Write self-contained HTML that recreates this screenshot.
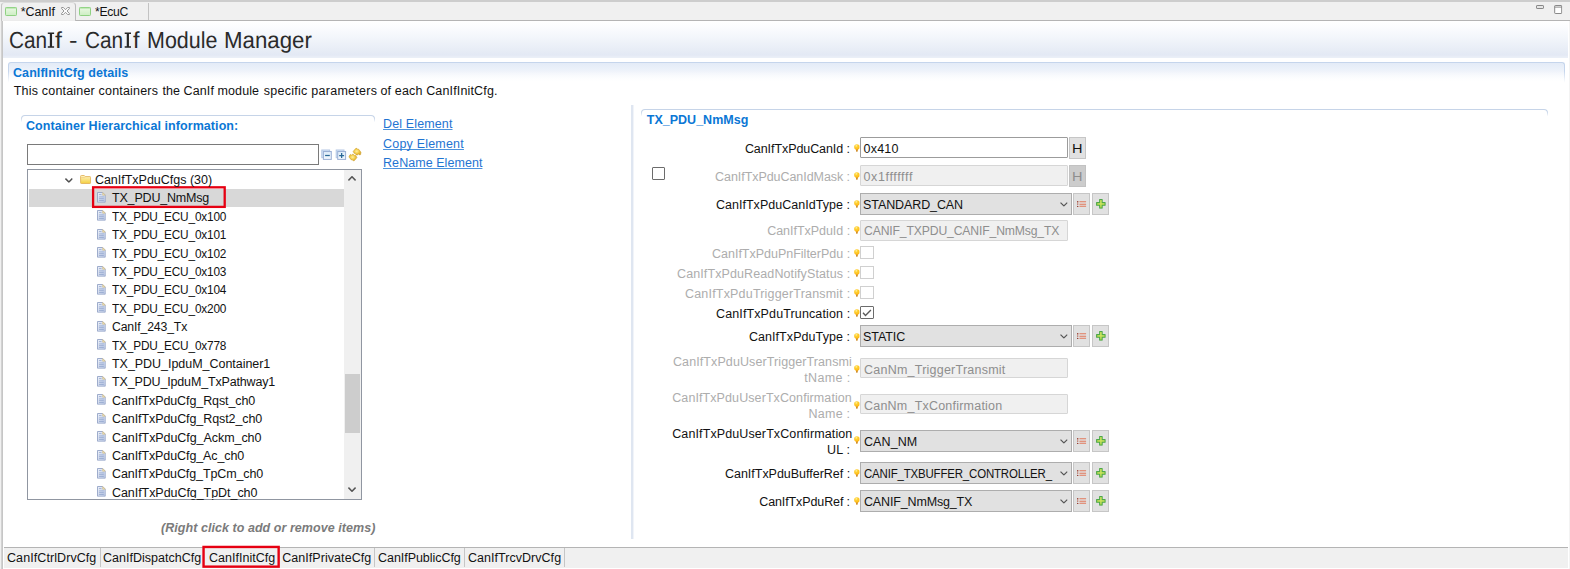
<!DOCTYPE html>
<html lang="en"><head><meta charset="utf-8"><title>CanIf - CanIf Module Manager</title>
<style>
html,body{margin:0;padding:0;font-family:"Liberation Sans",sans-serif;}
body{width:1570px;height:569px;overflow:hidden;position:relative;background:#f0f0f0;
  font-family:"Liberation Sans",sans-serif;color:#1a1a1a;}
.a{position:absolute;box-sizing:border-box;}
.t{position:absolute;white-space:nowrap;line-height:1;color:#121212;transform-origin:0 0;}
.t.title{color:#2b2b2b;}
.t.ghost{color:transparent;}
.t.b{font-weight:bold;}
.t.blue{color:#0b77d5;}
.t.lnk{color:#1f74d2;text-decoration:underline;text-decoration-thickness:1px;text-underline-offset:1px;text-decoration-skip-ink:none;text-decoration-color:#4d93dd;}
.t.bi{font-weight:bold;font-style:italic;}
.t.gray{color:#7b7b7b;}
.t.dis{color:#adadad;}
.t.dis2{color:#8e8e8e;}
svg{position:absolute;overflow:visible;}

/* ---- frame ---- */
#topstrip{left:0;top:0;width:1570px;height:2px;background:#cdcdcd;}
#leftedge{left:1px;top:4px;width:2px;height:565px;background:linear-gradient(to right,#d2d2d2 50%,#c6c6c6 50%);}
#tabline{left:75px;top:20px;width:1495px;height:1px;background:#b4b4b4;}
#editor{left:3px;top:21px;width:1566.4px;height:548px;background:#fff;}
#hdr{left:3px;top:21px;width:1565.4px;height:38px;
  background:linear-gradient(to bottom,#ffffff 0px,#fbfcfe 6px,#f3f6fb 16px,#e3e9f4 34px,#e8edf6 35.5px,#eaeff7 36.6px,#ffffff 37.2px);}
#tab1{left:1px;top:2px;width:75px;height:19px;background:#f0f0f0;border:1px solid #bcbcbc;border-top-color:#dcdcdc;border-left-color:#c4c4c4;border-bottom:none;border-radius:4px 4px 0 0;}
#tab1sh{left:3px;top:20px;width:72px;height:1px;background:#ececec;}
#tab2r{left:148px;top:3px;width:1px;height:17px;background:#c3c3c3;}

/* ---- sections ---- */
#sec1{left:8px;top:62px;width:1557px;height:22px;border:1px solid #c5d5ec;border-bottom:none;border-radius:3px 3px 0 0;
  background:linear-gradient(to bottom,#e3ebf7 0,#f1f5fb 10px,#ffffff 20px);}
#sec1:after{content:"";position:absolute;left:-1px;right:-1px;top:8px;bottom:0;
  background:linear-gradient(to bottom,rgba(255,255,255,0),#fff 90%);}
.sec{border:1px solid #c6d4e8;border-bottom:none;border-radius:4px 4px 0 0;height:8px;}
.sec:after{content:"";position:absolute;left:-1px;right:-1px;top:2px;bottom:0;
  background:linear-gradient(to bottom,rgba(255,255,255,0),#fff 85%);}
#sash{left:631px;top:105px;width:3px;height:434px;background:linear-gradient(to right,#dfe6f1 66.6%,#f1f4f9 66.6%);}

/* ---- left widgets ---- */
#filter{left:27px;top:144px;width:292px;height:21px;border:1px solid #7a7a7a;background:#fff;}
#tree{left:27px;top:169px;width:335px;height:331px;border:1px solid #9096a1;background:#fff;overflow:hidden;}
#sel{left:29px;top:189px;width:314.6px;height:17.6px;background:#d8d8d8;}
#redsel{left:92px;top:186.2px;width:134px;height:21.6px;border:2px solid #e60f1e;}
#sbar{left:344.4px;top:170px;width:16.6px;height:329px;background:#f0f0f0;}
#thumb{left:344.6px;top:373.6px;width:15.4px;height:59.2px;background:#cdcdcd;}

/* ---- form widgets ---- */
.inp{border:1px solid #9c9c9c;background:#fff;border-radius:1px;}
.inp.d{border:1px solid #d6d6d6;background:#f0f0f0;}
.btn{border:1px solid #c6c6c6;background:#e1e1e1;}
.btn.d{background:#cccccc;border-color:#c2c2c2;}
.cmb{border:1px solid #adadad;background:#e1e1e1;}
.cb{border:1px solid #d0d0d0;background:#fff;}
.cb.e{border:1px solid #6c6c6c;border-radius:1px;}

/* ---- bottom tabs ---- */
#bot{left:4px;top:547px;width:1564.4px;height:20.7px;background:#f0f0f0;border-top:1px solid #b4b4b4;}
.bsep{top:548px;width:1px;height:19px;background:#c6c6c6;}
#bred{left:202.4px;top:546px;width:77.4px;height:21.6px;border:2px solid #e60f1e;}
#botline{left:1569.4px;top:21px;width:1px;height:548px;background:#f3f3f3;}

</style></head>
<body>

<svg width="0" height="0" style="position:absolute">
<defs>
<linearGradient id="gGreen" x1="0" y1="0" x2="0" y2="1"><stop offset="0" stop-color="#eaf8e4"/><stop offset="1" stop-color="#cdeec3"/></linearGradient>
<linearGradient id="gFold" x1="0" y1="0" x2="0" y2="1"><stop offset="0" stop-color="#fff6c8"/><stop offset="1" stop-color="#f4cf3e"/></linearGradient>
<linearGradient id="gFile" x1="0" y1="0" x2="1" y2="1"><stop offset="0" stop-color="#eef2fa"/><stop offset="1" stop-color="#b9c7e4"/></linearGradient>
<radialGradient id="gBulb" cx="0.4" cy="0.3" r="0.7"><stop offset="0" stop-color="#fff2a8"/><stop offset="0.35" stop-color="#ffd233"/><stop offset="1" stop-color="#fdb515"/></radialGradient>
<linearGradient id="gPlus" x1="0" y1="0" x2="0" y2="1"><stop offset="0" stop-color="#c9e356"/><stop offset="1" stop-color="#8cc63f"/></linearGradient>
<linearGradient id="gSq" x1="0" y1="0" x2="0" y2="1"><stop offset="0" stop-color="#dbeaf8"/><stop offset="1" stop-color="#f4f9fe"/></linearGradient>
<symbol id="iTab" viewBox="0 0 12 9"><rect x="0.5" y="0.5" width="11" height="8" rx="0.8" fill="url(#gGreen)" stroke="#8fd183"/><rect x="0.5" y="0.5" width="11" height="1.2" fill="#9ddb92" opacity=".7"/></symbol>
<symbol id="iClose" viewBox="0 0 9 8"><path d="M0.6 0.5 L2.4 0.5 L4.5 2.7 L6.6 0.5 L8.4 0.5 L8.4 1.6 L6 4 L8.4 6.4 L8.4 7.5 L6.6 7.5 L4.5 5.3 L2.4 7.5 L0.6 7.5 L0.6 6.4 L3 4 L0.6 1.6 Z" fill="#fdfdfd" stroke="#8c8c8c" stroke-width="0.9" stroke-linejoin="round"/></symbol>
<symbol id="iFolder" viewBox="0 0 11 9"><path d="M0.5 1.3 Q0.5 0.5 1.3 0.5 L4.2 0.5 L5.2 1.6 L9.8 1.6 Q10.5 1.6 10.5 2.3 L10.5 7.8 Q10.5 8.5 9.8 8.5 L1.2 8.5 Q0.5 8.5 0.5 7.8 Z" fill="url(#gFold)" stroke="#e3b45e" stroke-width="0.9"/><path d="M1.2 2.6 L4.6 2.6 L5.4 1.9" fill="none" stroke="#f0c878" stroke-width="0.7"/></symbol>
<symbol id="iFile" viewBox="0 0 9 11"><path d="M0.5 0.5 L5.8 0.5 L8.5 3.2 L8.5 10.5 L0.5 10.5 Z" fill="url(#gFile)" stroke="#96a5c8" stroke-width="0.95"/><path d="M5.8 0.5 L5.8 3.2 L8.5 3.2 Z" fill="#efe2b4" stroke="#cdb988" stroke-width="0.6"/><path d="M2 2.6 H4.6 M2 5 H7 M2 6.8 H7 M2 8.6 H7" stroke="#7f95c4" stroke-width="0.8" fill="none" opacity=".8"/></symbol>
<symbol id="iBulb" viewBox="0 0 6 8.4"><path d="M1.7 4.6 L4.3 4.6 L3.7 7.6 L3 8.2 L2.3 7.6 Z" fill="#cf8a24"/><circle cx="3" cy="3" r="2.85" fill="url(#gBulb)"/></symbol>
<symbol id="iChev" viewBox="0 0 8 5"><path d="M0.4 0.6 L4 4.2 L7.6 0.6" fill="none" stroke="#555" stroke-width="1.25"/></symbol><symbol id="iChevT" viewBox="0 0 8 5"><path d="M0.4 0.6 L4 4.2 L7.6 0.6" fill="none" stroke="#505050" stroke-width="1.55"/></symbol>
<symbol id="iChevUp" viewBox="0 0 8 5"><path d="M0.4 4.4 L4 0.8 L7.6 4.4" fill="none" stroke="#555" stroke-width="1.6"/></symbol><symbol id="iChevDn" viewBox="0 0 8 5"><path d="M0.4 0.6 L4 4.2 L7.6 0.6" fill="none" stroke="#555" stroke-width="1.6"/></symbol>
<symbol id="iList" viewBox="0 0 10 6"><path d="M2.5 0.7 H9.3 M2.5 3.25 H9.3 M2.5 5.4 H9.3" stroke="#e17a5c" stroke-width="1.05" fill="none"/><circle cx="0.75" cy="0.7" r="0.7" fill="#8a2415"/><circle cx="0.75" cy="3.1" r="0.65" fill="#a13a26"/><circle cx="0.75" cy="5.4" r="0.7" fill="#8a2415"/><path d="M0.75 1.4 V2.4" stroke="#c2573c" stroke-width="0.6"/></symbol>
<symbol id="iPlus" viewBox="0 0 10 10"><path d="M3.7 0.6 H6.3 V3.7 H9.4 V6.3 H6.3 V9.4 H3.7 V6.3 H0.6 V3.7 H3.7 Z" fill="url(#gPlus)" stroke="#4ea84c" stroke-width="1.05" stroke-linejoin="round"/><path d="M5 1.6 V8.4 M1.6 5 H8.4" stroke="#dcea6c" stroke-width="0.9" opacity=".8"/></symbol>
<symbol id="iColl" viewBox="0 0 11 11"><rect x="0.5" y="0.5" width="8.6" height="8.4" fill="#d3e4f5" stroke="#b7c7e3" stroke-width="0.9"/><rect x="2.1" y="2" width="8.4" height="8.4" fill="url(#gSq)" stroke="#a3b4d6" stroke-width="0.9"/><path d="M3.7 6.2 H8.9" stroke="#2f6f9f" stroke-width="1.1"/></symbol>
<symbol id="iExp" viewBox="0 0 11 11"><rect x="0.5" y="0.5" width="8.6" height="8.4" fill="#d3e4f5" stroke="#b7c7e3" stroke-width="0.9"/><rect x="2.1" y="2" width="8.4" height="8.4" fill="url(#gSq)" stroke="#a3b4d6" stroke-width="0.9"/><path d="M3.7 6.2 H8.9 M6.3 3.6 V8.8" stroke="#2f6f9f" stroke-width="1.1"/></symbol>
<symbol id="iSync" viewBox="0 0 12 13"><path d="M4.2 2.8 L7 0.4 L9.6 0.9 L11.6 3.6 L10.3 5.6 L9.2 4.4 L7.6 4.2 L6.4 5.3 Z" fill="#f2ce4c" stroke="#cfa02a" stroke-width="0.7" stroke-linejoin="round"/><path d="M7.8 10.2 L5 12.6 L2.4 12.1 L0.4 9.4 L1.7 7.4 L2.8 8.6 L4.4 8.8 L5.6 7.7 Z" fill="#f2ce4c" stroke="#cfa02a" stroke-width="0.7" stroke-linejoin="round"/></symbol>
<symbol id="iMin" viewBox="0 0 8 4"><rect x="0.5" y="0.5" width="7" height="3" rx="0.6" fill="#e6e6e6" stroke="#7c7c7c" stroke-width="0.9"/></symbol>
<symbol id="iMax" viewBox="0 0 8 9"><rect x="0.5" y="0.5" width="7" height="8" rx="0.6" fill="#ffffff" stroke="#7c7c7c" stroke-width="0.9"/><path d="M0.5 2.1 H7.5" stroke="#7c7c7c" stroke-width="0.9"/></symbol>
<symbol id="iCheck" viewBox="0 0 10 8"><path d="M0.8 3.9 L3.6 6.8 L9.3 0.8" fill="none" stroke="#3a3a3a" stroke-width="1.1"/></symbol>
</defs>
</svg>

<div class="a" id="topstrip"></div>
<div class="a" id="editor"></div>
<div class="a" id="hdr"></div>
<div class="a" id="tabline"></div>
<div class="a" id="leftedge"></div>
<div class="a" id="tab1"></div><div class="a" id="tab1sh"></div><div class="a" id="tab2r"></div>
<svg class="ic" style="left:5.00px;top:7.00px" width="12" height="9"><use href="#iTab"/></svg>
<svg class="ic" style="left:61.00px;top:7.00px" width="9" height="8"><use href="#iClose"/></svg>
<svg class="ic" style="left:79.40px;top:7.00px" width="12" height="9"><use href="#iTab"/></svg>
<svg class="ic" style="left:1536.00px;top:5.00px" width="8" height="4"><use href="#iMin"/></svg>
<svg class="ic" style="left:1554.00px;top:5.00px" width="8.4" height="9"><use href="#iMax"/></svg>
<div class="a" id="sec1"></div>
<div class="a sec" style="left:20.50px;top:115.00px;width:354.00px;height:8.00px"></div>
<div class="a sec" style="left:641.00px;top:109.00px;width:907.00px;height:8.00px"></div>
<div class="a" id="sash"></div>
<div class="a" id="filter"></div>
<svg style="left:0;top:0" width="400" height="200">
<defs><radialGradient id="gGold" cx="0.45" cy="0.45" r="0.6"><stop offset="0" stop-color="#fff0a0"/><stop offset="0.55" stop-color="#f3cb45"/><stop offset="1" stop-color="#d6a328"/></radialGradient></defs>
<rect x="321.8" y="150" width="7.8" height="7.7" fill="#d3e4f6" stroke="#b3c6e4" stroke-width="1"/>
<rect x="323.4" y="151.5" width="7.9" height="7.9" fill="url(#gSq)" stroke="#9bb0d5" stroke-width="1"/>
<path d="M325.1 155.5 H329.8" stroke="#2a6896" stroke-width="1.25"/>
<rect x="336.2" y="150" width="7.8" height="7.7" fill="#d3e4f6" stroke="#b3c6e4" stroke-width="1"/>
<rect x="337.7" y="151.5" width="7.9" height="7.9" fill="url(#gSq)" stroke="#9bb0d5" stroke-width="1"/>
<path d="M339.2 155.5 H344.1 M341.65 153 V158" stroke="#2a6896" stroke-width="1.25"/>
<path d="M353.2 151.4 L355.6 148.6 L356.8 148.3 L357.6 149.3 L358.6 149.2 L360.9 152.2 L360.6 154.6 L359.4 154.9 L358.6 153.9 L357.4 154.9 L356.2 154.9 L355.2 153.4 L354.2 153.3 Z" fill="url(#gGold)" stroke="#cf9f2a" stroke-width="0.6" stroke-linejoin="round"/>
<path d="M349.1 156.2 L350.4 154.4 L351.4 155.2 L352.4 154.2 L353.6 154.4 L354.6 155.6 L355.8 155.6 L356.9 157.6 L354.4 160.6 L353.2 160.8 L352.4 159.8 L351.4 159.9 L349.3 157.4 Z" fill="url(#gGold)" stroke="#cf9f2a" stroke-width="0.6" stroke-linejoin="round"/>
</svg>
<div class="a" id="tree"></div>
<div class="a" id="sel"></div>
<div class="a" id="sbar"></div><div class="a" id="thumb"></div>
<svg class="ic" style="left:348.30px;top:176.20px" width="8" height="5"><use href="#iChevUp"/></svg>
<svg class="ic" style="left:348.30px;top:487.00px" width="8" height="5"><use href="#iChevDn"/></svg>
<svg class="ic" style="left:65.30px;top:177.60px" width="7.8" height="4.8"><use href="#iChevT"/></svg>
<svg class="ic" style="left:79.70px;top:174.90px" width="11.2" height="9"><use href="#iFolder"/></svg>
<svg class="ic" style="left:97.20px;top:192.00px" width="8.8" height="10.8"><use href="#iFile"/></svg>
<svg class="ic" style="left:97.20px;top:210.40px" width="8.8" height="10.8"><use href="#iFile"/></svg>
<svg class="ic" style="left:97.20px;top:228.80px" width="8.8" height="10.8"><use href="#iFile"/></svg>
<svg class="ic" style="left:97.20px;top:247.20px" width="8.8" height="10.8"><use href="#iFile"/></svg>
<svg class="ic" style="left:97.20px;top:265.60px" width="8.8" height="10.8"><use href="#iFile"/></svg>
<svg class="ic" style="left:97.20px;top:284.00px" width="8.8" height="10.8"><use href="#iFile"/></svg>
<svg class="ic" style="left:97.20px;top:302.40px" width="8.8" height="10.8"><use href="#iFile"/></svg>
<svg class="ic" style="left:97.20px;top:320.80px" width="8.8" height="10.8"><use href="#iFile"/></svg>
<svg class="ic" style="left:97.20px;top:339.20px" width="8.8" height="10.8"><use href="#iFile"/></svg>
<svg class="ic" style="left:97.20px;top:357.60px" width="8.8" height="10.8"><use href="#iFile"/></svg>
<svg class="ic" style="left:97.20px;top:376.00px" width="8.8" height="10.8"><use href="#iFile"/></svg>
<svg class="ic" style="left:97.20px;top:394.40px" width="8.8" height="10.8"><use href="#iFile"/></svg>
<svg class="ic" style="left:97.20px;top:412.80px" width="8.8" height="10.8"><use href="#iFile"/></svg>
<svg class="ic" style="left:97.20px;top:431.20px" width="8.8" height="10.8"><use href="#iFile"/></svg>
<svg class="ic" style="left:97.20px;top:449.60px" width="8.8" height="10.8"><use href="#iFile"/></svg>
<svg class="ic" style="left:97.20px;top:468.00px" width="8.8" height="10.8"><use href="#iFile"/></svg>
<svg class="ic" style="left:97.20px;top:486.40px" width="8.8" height="10.8"><use href="#iFile"/></svg>
<svg style="left:0;top:0" width="400" height="569"><rect x="93.1" y="187.3" width="131.6" height="19.6" fill="none" stroke="#e60012" stroke-width="2.3"/></svg>
<div class="a inp" style="left:860.40px;top:137.00px;width:207.40px;height:21.20px"></div>
<svg class="ic" style="left:853.50px;top:143.70px" width="5.8" height="8.2"><use href="#iBulb"/></svg>
<div class="a btn" style="left:1068.60px;top:136.60px;width:17.30px;height:22.40px"></div>
<div class="a cb e" style="left:651.60px;top:167.00px;width:13.40px;height:13.20px"></div>
<div class="a inp d" style="left:860.40px;top:165.00px;width:207.40px;height:21.00px"></div>
<svg class="ic" style="left:853.50px;top:171.90px" width="5.8" height="8.2"><use href="#iBulb"/></svg>
<div class="a btn d" style="left:1068.60px;top:164.60px;width:17.30px;height:22.40px"></div>
<div class="a cmb" style="left:860.00px;top:193.00px;width:212.00px;height:21.60px"></div><svg class="ic" style="left:1059.60px;top:202.00px" width="7.8" height="4.7"><use href="#iChev"/></svg><div class="a btn" style="left:1072.80px;top:193.00px;width:17.00px;height:21.60px"></div><svg class="ic" style="left:1076.60px;top:200.90px" width="9.8" height="6"><use href="#iList"/></svg><div class="a btn" style="left:1092.00px;top:193.00px;width:17.20px;height:21.60px"></div><svg class="ic" style="left:1095.80px;top:199.00px" width="9.8" height="9.8"><use href="#iPlus"/></svg>
<svg class="ic" style="left:853.50px;top:199.70px" width="5.8" height="8.2"><use href="#iBulb"/></svg>
<div class="a inp d" style="left:860.40px;top:220.00px;width:207.40px;height:21.00px"></div>
<svg class="ic" style="left:853.50px;top:226.30px" width="5.8" height="8.2"><use href="#iBulb"/></svg>
<div class="a cb" style="left:860.00px;top:246.20px;width:14.00px;height:13.00px"></div>
<svg class="ic" style="left:853.50px;top:248.90px" width="5.8" height="8.2"><use href="#iBulb"/></svg>
<div class="a cb" style="left:860.00px;top:266.20px;width:14.00px;height:13.00px"></div>
<svg class="ic" style="left:853.50px;top:268.90px" width="5.8" height="8.2"><use href="#iBulb"/></svg>
<div class="a cb" style="left:860.00px;top:286.00px;width:14.00px;height:13.00px"></div>
<svg class="ic" style="left:853.50px;top:288.70px" width="5.8" height="8.2"><use href="#iBulb"/></svg>
<div class="a cb e" style="left:860.00px;top:306.00px;width:14.00px;height:13.00px"></div>
<svg class="ic" style="left:853.50px;top:308.70px" width="5.8" height="8.2"><use href="#iBulb"/></svg>
<svg style="left:0;top:0" width="900" height="330"><path d="M863 312.8 L865.5 315.5 L870.9 310.1" fill="none" stroke="#5a5a5a" stroke-width="1.35"/></svg>
<div class="a cmb" style="left:860.00px;top:325.40px;width:212.00px;height:21.60px"></div><svg class="ic" style="left:1059.60px;top:334.40px" width="7.8" height="4.7"><use href="#iChev"/></svg><div class="a btn" style="left:1072.80px;top:325.40px;width:17.00px;height:21.60px"></div><svg class="ic" style="left:1076.60px;top:333.30px" width="9.8" height="6"><use href="#iList"/></svg><div class="a btn" style="left:1092.00px;top:325.40px;width:17.20px;height:21.60px"></div><svg class="ic" style="left:1095.80px;top:331.40px" width="9.8" height="9.8"><use href="#iPlus"/></svg>
<svg class="ic" style="left:853.50px;top:332.70px" width="5.8" height="8.2"><use href="#iBulb"/></svg>
<div class="a inp d" style="left:860.40px;top:358.00px;width:207.40px;height:20.00px"></div>
<svg class="ic" style="left:853.50px;top:364.70px" width="5.8" height="8.2"><use href="#iBulb"/></svg>
<div class="a inp d" style="left:860.40px;top:394.00px;width:207.40px;height:20.00px"></div>
<svg class="ic" style="left:853.50px;top:400.70px" width="5.8" height="8.2"><use href="#iBulb"/></svg>
<div class="a cmb" style="left:860.00px;top:430.00px;width:212.00px;height:21.60px"></div><svg class="ic" style="left:1059.60px;top:439.00px" width="7.8" height="4.7"><use href="#iChev"/></svg><div class="a btn" style="left:1072.80px;top:430.00px;width:17.00px;height:21.60px"></div><svg class="ic" style="left:1076.60px;top:437.90px" width="9.8" height="6"><use href="#iList"/></svg><div class="a btn" style="left:1092.00px;top:430.00px;width:17.20px;height:21.60px"></div><svg class="ic" style="left:1095.80px;top:436.00px" width="9.8" height="9.8"><use href="#iPlus"/></svg>
<svg class="ic" style="left:853.50px;top:436.20px" width="5.8" height="8.2"><use href="#iBulb"/></svg>
<div class="a cmb" style="left:860.00px;top:462.00px;width:212.00px;height:21.60px"></div><svg class="ic" style="left:1059.60px;top:471.00px" width="7.8" height="4.7"><use href="#iChev"/></svg><div class="a btn" style="left:1072.80px;top:462.00px;width:17.00px;height:21.60px"></div><svg class="ic" style="left:1076.60px;top:469.90px" width="9.8" height="6"><use href="#iList"/></svg><div class="a btn" style="left:1092.00px;top:462.00px;width:17.20px;height:21.60px"></div><svg class="ic" style="left:1095.80px;top:468.00px" width="9.8" height="9.8"><use href="#iPlus"/></svg>
<svg class="ic" style="left:853.50px;top:468.70px" width="5.8" height="8.2"><use href="#iBulb"/></svg>
<div class="a cmb" style="left:860.00px;top:490.00px;width:212.00px;height:21.60px"></div><svg class="ic" style="left:1059.60px;top:499.00px" width="7.8" height="4.7"><use href="#iChev"/></svg><div class="a btn" style="left:1072.80px;top:490.00px;width:17.00px;height:21.60px"></div><svg class="ic" style="left:1076.60px;top:497.90px" width="9.8" height="6"><use href="#iList"/></svg><div class="a btn" style="left:1092.00px;top:490.00px;width:17.20px;height:21.60px"></div><svg class="ic" style="left:1095.80px;top:496.00px" width="9.8" height="9.8"><use href="#iPlus"/></svg>
<svg class="ic" style="left:853.50px;top:496.70px" width="5.8" height="8.2"><use href="#iBulb"/></svg>
<div class="a" id="bot"></div>
<div class="a bsep" style="left:100px"></div>
<div class="a bsep" style="left:373.6px"></div>
<div class="a bsep" style="left:464.4px"></div>
<div class="a bsep" style="left:564px"></div>
<div class="a" id="botline"></div>
<svg style="left:0;top:0" width="400" height="569"><rect x="203.55" y="546.95" width="75.1" height="19.7" fill="none" stroke="#e60012" stroke-width="2.4"/></svg>
<svg style="left:0;top:0" width="200" height="60"><path d="M47.8 32.4 H54.1 V33.9 H52.05 V46.3 H54.1 V47.8 H47.8 V46.3 H49.85 V33.9 H47.8 Z" fill="#262626"/></svg>
<svg style="left:0;top:0" width="200" height="60"><path d="M124.7 32.4 H131.0 V33.9 H128.95 V46.3 H131.0 V47.8 H124.7 V46.3 H126.75 V33.9 H124.7 Z" fill="#262626"/></svg>
<span class="t" style="left:20.78px;top:6px;font-size:12.5px;letter-spacing:-0.101px;">*CanIf</span>
<span class="t" style="left:95.00px;top:6px;font-size:12.5px;letter-spacing:-0.306px;transform:scaleX(0.9737);">*EcuC</span>
<span class="t title" style="left:8.66px;top:29px;font-size:23.2px;transform:matrix(0.8973,0.001,0,1,0,0);">Can</span>
<span class="t title ghost" style="left:47.80px;top:29px;font-size:23.2px;">I</span>
<span class="t title" style="left:55.39px;top:29px;font-size:23.2px;transform:matrix(1.0720,0.001,0,1,0,0);">f</span>
<span class="t title" style="left:69.15px;top:29px;font-size:23.2px;transform:matrix(1.1019,0.001,0,1,0,0);">-</span>
<span class="t title" style="left:84.93px;top:29px;font-size:23.2px;transform:matrix(0.8973,0.001,0,1,0,0);">Can</span>
<span class="t title ghost" style="left:124.70px;top:29px;font-size:23.2px;">I</span>
<span class="t title" style="left:132.56px;top:29px;font-size:23.2px;transform:matrix(1.0098,0.001,0,1,0,0);">f</span>
<span class="t title" style="left:146.71px;top:29px;font-size:23.2px;transform:matrix(0.9268,0.001,0,1,0,0);">Module</span>
<span class="t title" style="left:223.64px;top:29px;font-size:23.2px;transform:matrix(0.9600,0.001,0,1,0,0);">Manager</span>
<span class="t b blue" style="left:13.00px;top:67px;font-size:12.5px;letter-spacing:0.075px;">CanIfInitCfg details</span>
<span class="t" style="left:13.78px;top:85px;font-size:12.5px;letter-spacing:0.189px;">This container containers</span>
<span class="t" style="left:162.39px;top:85px;font-size:12.5px;letter-spacing:0.097px;">the CanIf module</span>
<span class="t" style="left:263.83px;top:85px;font-size:12.5px;letter-spacing:0.262px;">specific parameters</span>
<span class="t" style="left:380.44px;top:85px;font-size:12.5px;letter-spacing:0.154px;">of each CanIfInitCfg.</span>
<span class="t b blue" style="left:26.00px;top:120px;font-size:12.5px;letter-spacing:0.072px;">Container Hierarchical information:</span>
<span class="t lnk" style="left:383.05px;top:118px;font-size:12.5px;letter-spacing:0.123px;">Del Element</span>
<span class="t lnk" style="left:383.05px;top:138px;font-size:12.5px;letter-spacing:0.199px;">Copy Element</span>
<span class="t lnk" style="left:383.05px;top:157px;font-size:12.5px;letter-spacing:0.051px;">ReName Element</span>
<span class="t" style="left:94.88px;top:174px;font-size:12.5px;letter-spacing:-0.009px;">CanIfTxPduCfgs (30)</span>
<span class="t trow" style="left:112.00px;top:192px;font-size:12.5px;letter-spacing:-0.182px;">TX_PDU_NmMsg</span>
<span class="t trow" style="left:112.00px;top:211px;font-size:12.5px;letter-spacing:-0.184px;transform:scaleX(0.9463);">TX_PDU_ECU_0x100</span>
<span class="t trow" style="left:112.00px;top:229px;font-size:12.5px;letter-spacing:-0.184px;transform:scaleX(0.9463);">TX_PDU_ECU_0x101</span>
<span class="t trow" style="left:112.00px;top:248px;font-size:12.5px;letter-spacing:-0.184px;transform:scaleX(0.9463);">TX_PDU_ECU_0x102</span>
<span class="t trow" style="left:112.00px;top:266px;font-size:12.5px;letter-spacing:-0.184px;transform:scaleX(0.9463);">TX_PDU_ECU_0x103</span>
<span class="t trow" style="left:112.00px;top:284px;font-size:12.5px;letter-spacing:-0.184px;transform:scaleX(0.9463);">TX_PDU_ECU_0x104</span>
<span class="t trow" style="left:112.00px;top:303px;font-size:12.5px;letter-spacing:-0.184px;transform:scaleX(0.9463);">TX_PDU_ECU_0x200</span>
<span class="t trow" style="left:112.00px;top:321px;font-size:12.5px;letter-spacing:-0.159px;transform:scaleX(0.9809);">CanIf_243_Tx</span>
<span class="t trow" style="left:112.00px;top:340px;font-size:12.5px;letter-spacing:-0.184px;transform:scaleX(0.9463);">TX_PDU_ECU_0x778</span>
<span class="t trow" style="left:112.00px;top:358px;font-size:12.5px;letter-spacing:-0.036px;">TX_PDU_IpduM_Container1</span>
<span class="t trow" style="left:112.00px;top:376px;font-size:12.5px;letter-spacing:-0.156px;">TX_PDU_IpduM_TxPathway1</span>
<span class="t trow" style="left:112.00px;top:395px;font-size:12.5px;letter-spacing:-0.090px;">CanIfTxPduCfg_Rqst_ch0</span>
<span class="t trow" style="left:112.00px;top:413px;font-size:12.5px;letter-spacing:-0.084px;">CanIfTxPduCfg_Rqst2_ch0</span>
<span class="t trow" style="left:112.00px;top:432px;font-size:12.5px;letter-spacing:-0.064px;">CanIfTxPduCfg_Ackm_ch0</span>
<span class="t trow" style="left:112.00px;top:450px;font-size:12.5px;letter-spacing:-0.094px;">CanIfTxPduCfg_Ac_ch0</span>
<span class="t trow" style="left:112.00px;top:468px;font-size:12.5px;letter-spacing:-0.106px;">CanIfTxPduCfg_TpCm_ch0</span>
<span class="t trow" style="left:112.00px;top:487px;font-size:12.5px;letter-spacing:-0.056px;">CanIfTxPduCfg_TpDt_ch0</span>
<span class="t bi gray" style="left:161.00px;top:522px;font-size:12.5px;letter-spacing:0.051px;">(Right click to add or remove items)</span>
<span class="t" style="left:7.00px;top:552px;font-size:12.5px;letter-spacing:0.079px;">CanIfCtrlDrvCfg</span>
<span class="t" style="left:103.00px;top:552px;font-size:12.5px;letter-spacing:0.024px;">CanIfDispatchCfg</span>
<span class="t" style="left:209.00px;top:552px;font-size:12.5px;letter-spacing:0.028px;">CanIfInitCfg</span>
<span class="t" style="left:282.22px;top:552px;font-size:12.5px;letter-spacing:0.054px;">CanIfPrivateCfg</span>
<span class="t" style="left:378.00px;top:552px;font-size:12.5px;letter-spacing:-0.044px;">CanIfPublicCfg</span>
<span class="t" style="left:468.00px;top:552px;font-size:12.5px;letter-spacing:0.034px;">CanIfTrcvDrvCfg</span>
<span class="t b blue" style="left:646.78px;top:114px;font-size:12.5px;letter-spacing:0.013px;">TX_PDU_NmMsg</span>
<span class="t" style="left:744.88px;top:143px;font-size:12.5px;letter-spacing:-0.072px;">CanIfTxPduCanId :</span>
<span class="t dis" style="left:715.05px;top:171px;font-size:12.5px;letter-spacing:-0.057px;">CanIfTxPduCanIdMask :</span>
<span class="t" style="left:715.88px;top:199px;font-size:12.5px;letter-spacing:0.038px;">CanIfTxPduCanIdType :</span>
<span class="t dis" style="left:767.22px;top:225px;font-size:12.5px;letter-spacing:-0.038px;">CanIfTxPduId :</span>
<span class="t dis" style="left:712.00px;top:248px;font-size:12.5px;letter-spacing:-0.006px;">CanIfTxPduPnFilterPdu :</span>
<span class="t dis" style="left:677.00px;top:268px;font-size:12.5px;letter-spacing:0.107px;">CanIfTxPduReadNotifyStatus :</span>
<span class="t dis" style="left:685.00px;top:288px;font-size:12.5px;letter-spacing:0.188px;">CanIfTxPduTriggerTransmit :</span>
<span class="t" style="left:716.00px;top:308px;font-size:12.5px;letter-spacing:0.123px;">CanIfTxPduTruncation :</span>
<span class="t" style="left:748.88px;top:331px;font-size:12.5px;letter-spacing:0.073px;">CanIfTxPduType :</span>
<span class="t dis" style="left:673.00px;top:356px;font-size:12.5px;letter-spacing:0.096px;">CanIfTxPduUserTriggerTransmi</span>
<span class="t dis" style="left:804.22px;top:372px;font-size:12.5px;letter-spacing:0.353px;">tName :</span>
<span class="t dis" style="left:672.22px;top:392px;font-size:12.5px;letter-spacing:0.091px;">CanIfTxPduUserTxConfirmation</span>
<span class="t dis" style="left:808.44px;top:408px;font-size:12.5px;letter-spacing:0.270px;">Name :</span>
<span class="t" style="left:672.22px;top:428px;font-size:12.5px;letter-spacing:0.108px;">CanIfTxPduUserTxConfirmation</span>
<span class="t" style="left:827.10px;top:444px;font-size:12.5px;letter-spacing:0.152px;">UL :</span>
<span class="t" style="left:725.00px;top:468px;font-size:12.5px;letter-spacing:-0.020px;">CanIfTxPduBufferRef :</span>
<span class="t" style="left:759.22px;top:496px;font-size:12.5px;letter-spacing:-0.109px;">CanIfTxPduRef :</span>
<span class="t" style="left:863.44px;top:143px;font-size:12.5px;letter-spacing:0.256px;">0x410</span>
<span class="t dis2" style="left:863.44px;top:171px;font-size:12.5px;letter-spacing:0.648px;">0x1fffffff</span>
<span class="t" style="left:863.10px;top:199px;font-size:12.5px;letter-spacing:-0.104px;">STANDARD_CAN</span>
<span class="t dis2" style="left:864.00px;top:225px;font-size:12.5px;letter-spacing:-0.148px;transform:scaleX(0.9747);">CANIF_TXPDU_CANIF_NmMsg_TX</span>
<span class="t" style="left:863.10px;top:331px;font-size:12.5px;letter-spacing:-0.094px;">STATIC</span>
<span class="t dis2" style="left:864.00px;top:364px;font-size:12.5px;letter-spacing:0.236px;">CanNm_TriggerTransmit</span>
<span class="t dis2" style="left:864.00px;top:400px;font-size:12.5px;letter-spacing:0.218px;">CanNm_TxConfirmation</span>
<span class="t" style="left:864.00px;top:436px;font-size:12.5px;letter-spacing:0.086px;">CAN_NM</span>
<span class="t" style="left:864.00px;top:468px;font-size:12.5px;letter-spacing:-0.186px;transform:scaleX(0.9169);">CANIF_TXBUFFER_CONTROLLER_</span>
<span class="t" style="left:864.00px;top:496px;font-size:12.5px;letter-spacing:-0.155px;">CANIF_NmMsg_TX</span>
<span class="t" style="left:1072.49px;top:143px;font-size:12.5px;transform:scaleX(1.1584);">H</span>
<span class="t dis2" style="left:1072.49px;top:171px;font-size:12.5px;transform:scaleX(1.1584);">H</span>
<div class="a" style="left:28px;top:498px;width:316px;height:1px;background:#fff"></div>
</body></html>
